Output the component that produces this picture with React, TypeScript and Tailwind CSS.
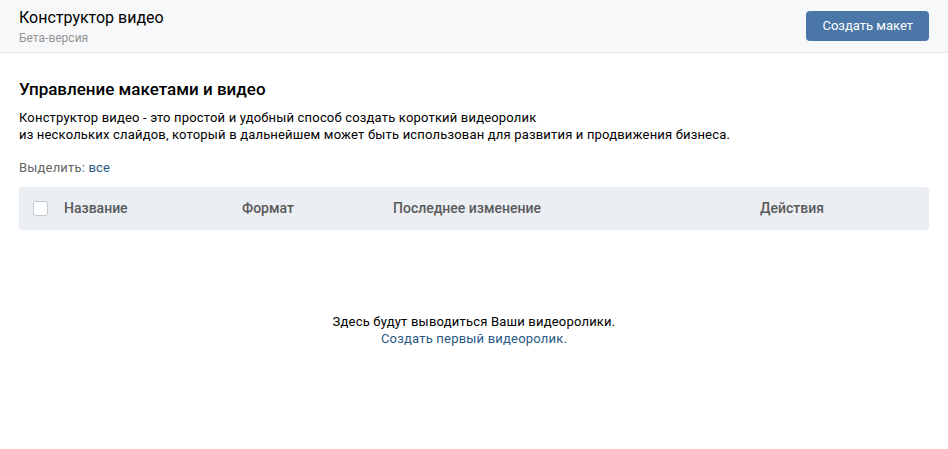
export default function App() {
  return (
    <div className="min-h-[449px] bg-white text-[#000] font-['Roboto',sans-serif]">
      <div className="flex h-[53px] items-center justify-between border-b border-[#e3e4e8] bg-[#f7f8fa] pl-[19px] pr-[19px]">
        <div className="flex flex-col">
          <div className="text-[16px] leading-[20px] text-[#000]">Конструктор видео</div>
          <div className="mt-[3px] text-[12px] leading-[14px] text-[#939393]">Бета-версия</div>
        </div>
        <button
          type="button"
          className="h-[30px] rounded-[4px] bg-[#4a76a8] px-[16px] text-[13px] text-white"
        >
          Создать макет
        </button>
      </div>

      <div className="px-[19px] pt-[25px]">
        <h2 className="text-[17px] leading-[22px] font-medium text-[#000]">Управление макетами и видео</h2>
        <p className="mt-[9px] text-[13px] leading-[17px] tracking-[0.18px] text-[#000]">
          Конструктор видео - это простой и удобный способ создать короткий видеоролик
          <br />
          из нескольких слайдов, который в дальнейшем может быть использован для развития и продвижения бизнеса.
        </p>
        <div className="mt-[16px] text-[13px] leading-[17px] tracking-[0.18px] text-[#656565]">
          Выделить: <span className="text-[#2a5885]">все</span>
        </div>

        <div className="mt-[11px] flex h-[43px] items-center rounded-[3px] bg-[#ebeef2] text-[14px] font-medium text-[#5a5a5a]">
          <div className="flex w-[45px] pl-[14px]">
            <span className="block h-[15px] w-[15px] rounded-[3px] border border-[#c1c9d1] bg-white" />
          </div>
          <div className="w-[178px]">Название</div>
          <div className="w-[151px]">Формат</div>
          <div className="w-[367px]">Последнее изменение</div>
          <div>Действия</div>
        </div>

        <div className="flex flex-col items-center pt-[83px] text-[13px] leading-[17px] tracking-[0.2px]">
          <div className="text-[#000]">Здесь будут выводиться Ваши видеоролики.</div>
          <div className="text-[#2a5885]">Создать первый видеоролик.</div>
        </div>
      </div>
    </div>
  );
}
